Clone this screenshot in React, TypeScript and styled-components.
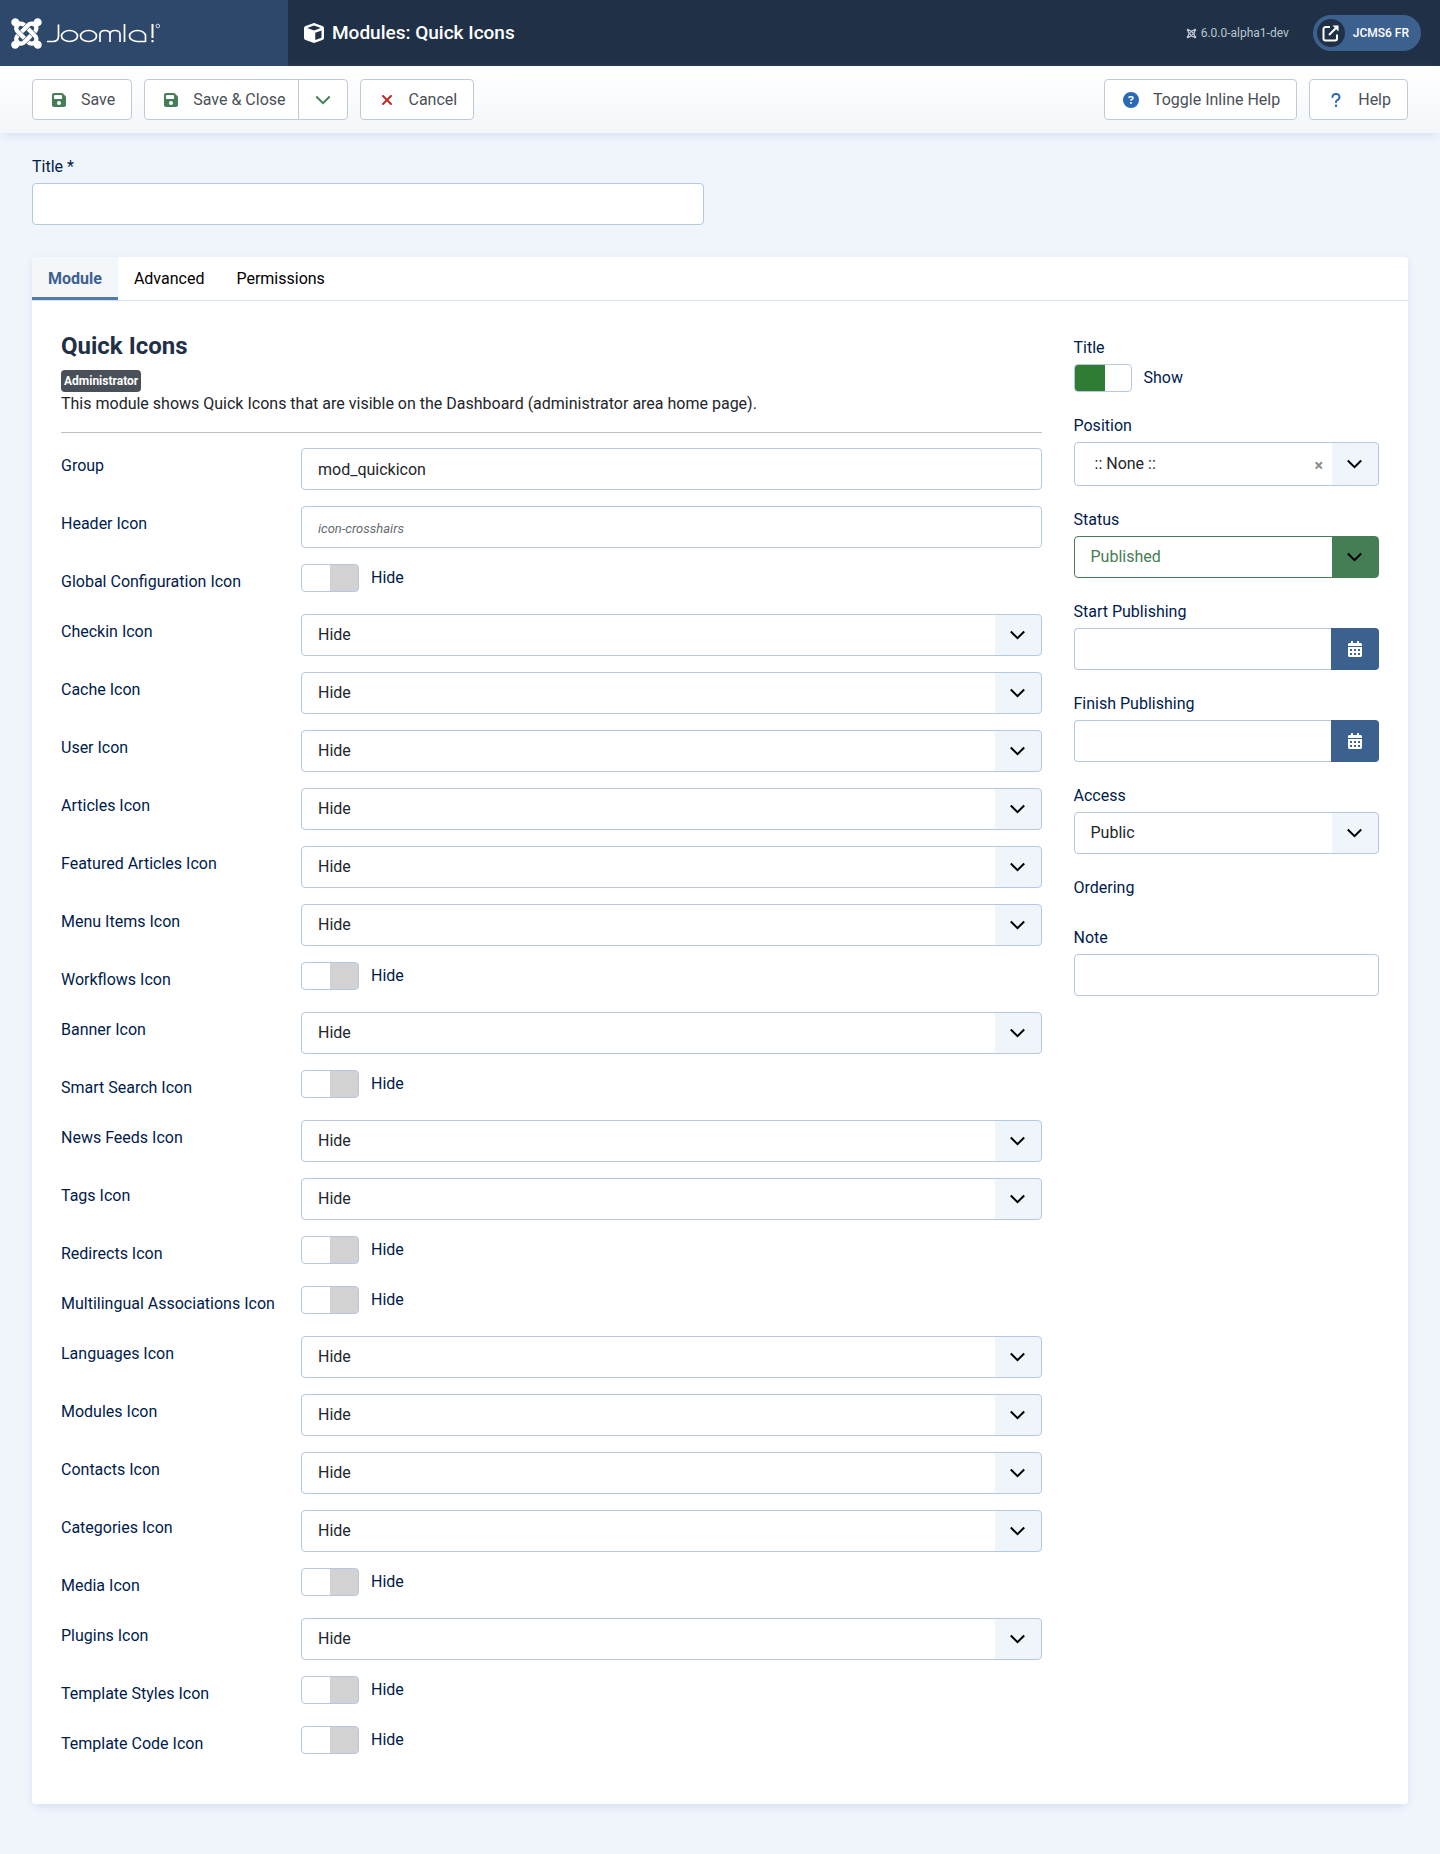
import React from "react";
import styled, { createGlobalStyle, css } from "styled-components";
import { FaCalendarAlt, FaJoomla } from "react-icons/fa";
import {
  FaCube,
  FaFloppyDisk,
  FaCircleQuestion,
  FaQuestion,
  FaXmark,
} from "react-icons/fa6";

const color = {
  page: "#f0f4fb",
  dark: "#1f3047",
  darkSoft: "#2e486b",
  accent: "#3d618f",
  label: "#001b4c",
  text: "#22262a",
  border: "#b5c7e3",
  green: "#457d54",
  red: "#c52827",
  blue: "#2a69b8",
};

const GlobalStyle = createGlobalStyle`
  *, *::before, *::after { box-sizing: border-box; }
  body {
    margin: 0;
    background: ${color.page};
    color: ${color.text};
    font-family: Roboto, "Noto Sans", sans-serif;
    font-size: 16px;
    line-height: 24px;
  }
  button, input, select { font: inherit; color: inherit; }
`;

const Header = styled.header`
  display: flex;
  align-items: center;
  height: 66px;
  background: ${color.dark};
  color: #fff;
`;

const Brand = styled.a`
  display: flex;
  align-items: center;
  flex: 0 0 288px;
  height: 100%;
  padding-left: 9px;
  background: ${color.darkSoft};
`;

const PageTitle = styled.h1`
  display: flex;
  align-items: center;
  gap: 8px;
  flex: 1;
  margin: 0;
  padding-left: 16px;
  font-size: 19px;
  font-weight: 500;
`;

const Version = styled.div`
  display: flex;
  align-items: center;
  gap: 4px;
  margin-right: 24px;
  color: #bcc5d1;
  font-size: 12px;
`;

const SiteLink = styled.a`
  display: flex;
  align-items: center;
  gap: 8px;
  height: 36px;
  margin-right: 19px;
  padding: 0 12px 0 4px;
  border-radius: 18px;
  background: ${color.accent};
  color: #fff;
  font-size: 12px;
  font-weight: 500;
  text-decoration: none;
`;

const SiteLinkIcon = styled.span`
  display: grid;
  place-items: center;
  width: 28px;
  height: 28px;
  border-radius: 50%;
  background: ${color.dark};
`;

const Toolbar = styled.div`
  display: flex;
  gap: 12px;
  padding: 13px 32px;
  background: linear-gradient(#fff, #f3f7fa);
  box-shadow: 0 4px 10px -4px #c9d5ea;
`;

const Spacer = styled.div`
  flex: 1;
`;

const ToolButton = styled.button<{ $tone: string }>`
  display: flex;
  align-items: center;
  height: 41px;
  padding: 0 16px 0 15px;
  border: 1px solid #c0c9d9;
  border-radius: 4px;
  background: #fff;
  color: #495057;

  svg {
    width: 22px;
    margin-right: 11px;
    color: ${(p) => p.$tone};
  }
`;

const SplitButton = styled.div`
  display: flex;

  ${ToolButton}:first-child {
    padding-right: 12px;
    border-radius: 4px 0 0 4px;
  }
  ${ToolButton}:last-child {
    justify-content: center;
    width: 50px;
    margin-left: -1px;
    padding: 0;
    border-radius: 0 4px 4px 0;
  }
  ${ToolButton}:last-child svg {
    margin: 0;
  }
`;

const Main = styled.main`
  padding: 20px 32px 50px;
`;

const Label = styled.label`
  display: block;
  color: ${color.label};
  line-height: 28px;
`;

const Stack = styled.div`
  display: flex;
  flex-direction: column;
  align-items: stretch;
  gap: 2px;
`;

const EmptyStack = styled(Stack)`
  height: 30px;
`;

const TitleField = styled(Stack)`
  width: calc(50% - 16px);
  margin-bottom: 32px;
`;

const TextInput = styled.input`
  display: block;
  width: 100%;
  height: 42px;
  padding: 0 16px;
  border: 1px solid ${color.border};
  border-radius: 4px;
  background: #fff;

  &::placeholder {
    color: #666b70;
    font-size: 13px;
    font-style: italic;
    opacity: 1;
  }
`;

const Card = styled.section`
  border-radius: 4px;
  background: #fff;
  box-shadow: 0 4px 10px -4px #c9d5ea, 0 0 6px #e6edf8;
`;

const Tabs = styled.div`
  display: flex;
  height: 44px;
  border-bottom: 1px solid #d9e2f0;
`;

const Tab = styled.button<{ $active?: boolean }>`
  padding: 0 16px;
  border: 0;
  background: none;
  color: #000;

  ${(p) =>
    p.$active &&
    css`
      padding-top: 3px;
      border-bottom: 3px solid #557aaa;
      border-top-left-radius: 4px;
      background: #f3f7fa;
      color: ${color.accent};
      font-weight: 700;
    `}
`;

const Panel = styled.div`
  display: grid;
  grid-template-columns: 3fr 1fr;
  padding: 33px 13px 44px;
`;

const Column = styled.div`
  min-width: 0;
  padding: 0 16px;
`;

const Heading = styled.h2`
  margin: 0 0 12px;
  color: ${color.dark};
  font-size: 24px;
  line-height: 24px;
`;

const Badge = styled.span`
  display: block;
  width: fit-content;
  padding: 0 3px;
  border-radius: 4px;
  background: #495057;
  color: #fff;
  font-size: 12px;
  font-weight: 700;
  line-height: 22px;
`;

const Description = styled.p`
  margin: 0;
`;

const Rule = styled.hr`
  height: 1px;
  margin: 16px 0 15px;
  border: 0;
  background: #bdbebf;
`;

const Rows = styled.div`
  display: flex;
  flex-direction: column;
  gap: 16px;
`;

const Row = styled.div`
  display: grid;
  grid-template-columns: 240px minmax(0, 1fr);
  align-items: start;

  > ${Label} {
    padding-top: 4px;
  }
`;

const SwitchLabel = styled.label`
  display: flex;
  align-items: center;
  gap: 12px;
  width: fit-content;
  height: 28px;
  color: ${color.label};
`;

const SwitchSlot = styled.div`
  height: 34px;
`;

const SwitchInput = styled.input`
  appearance: none;
  width: 58px;
  height: 28px;
  margin: 0;
  border: 1px solid ${color.border};
  border-radius: 4px;
  background: linear-gradient(90deg, #fff 50%, #d2d2d2 50%);

  &:checked {
    background: linear-gradient(90deg, #2f7d32 30px, #fff 30px);
  }
`;

const SelectFrame = styled.div<{ $success?: boolean; $tall?: boolean }>`
  display: flex;
  align-items: center;
  height: ${(p) => (p.$tall ? 44 : 42)}px;
  border: 1px solid ${(p) => (p.$success ? color.green : color.border)};
  border-radius: 4px;
  background: linear-gradient(
    270deg,
    ${(p) => (p.$success ? color.green : color.page)} 46px,
    #fff 46px
  );
  color: ${(p) => (p.$success ? color.green : color.text)};
  overflow: hidden;

  > svg {
    flex: none;
    margin: 0 16px;
    color: #000;
    pointer-events: none;
  }
`;

const Select = styled.select<{ $inset?: boolean }>`
  appearance: none;
  flex: 1;
  min-width: 0;
  height: 100%;
  padding: 0 ${(p) => (p.$inset ? 20 : 16)}px;
  border: 0;
  background: none;
`;

const ClearButton = styled.button`
  padding: 4px 8px 0;
  border: 0;
  background: none;
  color: #8a8a8a;
  font-size: 16px;
  font-weight: 700;
`;

const DateField = styled.div`
  display: flex;

  ${TextInput} {
    flex: 1;
    border-right: 0;
    border-radius: 4px 0 0 4px;
  }
`;

const DateButton = styled.button`
  display: grid;
  place-items: center;
  flex: 0 0 48px;
  padding: 0;
  border: 0;
  border-radius: 0 4px 4px 0;
  background: ${color.accent};
  color: #fff;
`;

const Sidebar = styled(Column)`
  display: flex;
  flex-direction: column;
  gap: 20px;
`;

const Chevron = () => (
  <svg width="15" height="10" viewBox="0 0 15 10" fill="none" stroke="currentColor" strokeWidth="2" aria-hidden="true">
    <path d="M0.800 1.500 7.500 8.200 14.200 1.500" />
  </svg>
);

const ToolChevron = () => (
  <svg height="10" viewBox="0 0 15 10" fill="none" stroke="currentColor" strokeWidth="2" aria-hidden="true">
    <path d="M0.800 1.500 7.500 8.200 14.200 1.500" />
  </svg>
);

const OutboundIcon = () => (
  <svg width="17" height="17" viewBox="0 0 17 17" fill="none" stroke="#fff" strokeWidth="2" aria-hidden="true">
    <path d="M8 2H3.500A2 2 0 0 0 1.500 4V13.500A2 2 0 0 0 3.500 15.500H13A2 2 0 0 0 15 13.500V9.500" />
    <path d="M7 10 14.500 2.500" />
    <path d="M10.500 0.500H16.500V6.500Z" fill="#fff" stroke="none" />
  </svg>
);

/* Rounded geometric word mark, drawn with strokes. */
const WordMark = () => (
  <svg width="120" height="30" viewBox="0 0 120 30" fill="none" stroke="#fff" strokeWidth="1.7" aria-label="Joomla!" role="img">
    <path d="M3 23.500H9Q14.500 23.500 14.500 18V6.500" />
    <ellipse cx="25.500" cy="18" rx="8" ry="5.500" />
    <ellipse cx="44.500" cy="18" rx="8" ry="5.500" />
    <path d="M56 24V16.500Q56 12.500 61 12.500Q66 12.500 66 16.500V24M66 16.500Q66 12.500 71 12.500Q76 12.500 76 16.500V24" />
    <path d="M80.500 6V24" />
    <path d="M101.500 24V18A8 5.500 0 1 0 93.500 23.500H101.500" />
    <path d="M108.500 6V20M108.500 22V24.200" strokeWidth="2" />
    <circle cx="113.800" cy="8" r="1.800" strokeWidth="0.800" />
  </svg>
);

const HideSelect = ({ id }: { id: string }) => (
  <SelectFrame>
    <Select id={id} defaultValue="0">
      <option value="0">Hide</option>
      <option value="1">Show</option>
    </Select>
    <Chevron />
  </SelectFrame>
);

const HideSwitch = ({ id }: { id: string }) => (
  <SwitchSlot>
    <SwitchLabel>
      <SwitchInput id={id} type="checkbox" role="switch" />
      Hide
    </SwitchLabel>
  </SwitchSlot>
);

const iconRows: { name: string; kind: "select" | "switch" }[] = [
  { name: "Global Configuration Icon", kind: "switch" },
  { name: "Checkin Icon", kind: "select" },
  { name: "Cache Icon", kind: "select" },
  { name: "User Icon", kind: "select" },
  { name: "Articles Icon", kind: "select" },
  { name: "Featured Articles Icon", kind: "select" },
  { name: "Menu Items Icon", kind: "select" },
  { name: "Workflows Icon", kind: "switch" },
  { name: "Banner Icon", kind: "select" },
  { name: "Smart Search Icon", kind: "switch" },
  { name: "News Feeds Icon", kind: "select" },
  { name: "Tags Icon", kind: "select" },
  { name: "Redirects Icon", kind: "switch" },
  { name: "Multilingual Associations Icon", kind: "switch" },
  { name: "Languages Icon", kind: "select" },
  { name: "Modules Icon", kind: "select" },
  { name: "Contacts Icon", kind: "select" },
  { name: "Categories Icon", kind: "select" },
  { name: "Media Icon", kind: "switch" },
  { name: "Plugins Icon", kind: "select" },
  { name: "Template Styles Icon", kind: "switch" },
  { name: "Template Code Icon", kind: "switch" },
];

const DateInput = ({ id }: { id: string }) => (
  <DateField>
    <TextInput id={id} type="text" />
    <DateButton type="button" aria-label="Open the calendar">
      <FaCalendarAlt size={16} />
    </DateButton>
  </DateField>
);

export default function App() {
  return (
    <>
      <GlobalStyle />
      <Header>
        <Brand href="#">
          <FaJoomla size={35} color="#fff" />
          <WordMark />
        </Brand>
        <PageTitle>
          <FaCube size={20} />
          Modules: Quick Icons
        </PageTitle>
        <Version>
          <FaJoomla size={11} />
          6.0.0-alpha1-dev
        </Version>
        <SiteLink href="#">
          <SiteLinkIcon>
            <OutboundIcon />
          </SiteLinkIcon>
          JCMS6 FR
        </SiteLink>
      </Header>

      <Toolbar>
        <ToolButton type="button" $tone={color.green}>
          <FaFloppyDisk size={16} />
          Save
        </ToolButton>
        <SplitButton>
          <ToolButton type="button" $tone={color.green}>
            <FaFloppyDisk size={16} />
            Save &amp; Close
          </ToolButton>
          <ToolButton type="button" $tone={color.green} aria-label="More save options">
            <ToolChevron />
          </ToolButton>
        </SplitButton>
        <ToolButton type="button" $tone={color.red}>
          <FaXmark size={16} />
          Cancel
        </ToolButton>
        <Spacer />
        <ToolButton type="button" $tone={color.blue}>
          <FaCircleQuestion size={16} />
          Toggle Inline Help
        </ToolButton>
        <ToolButton type="button" $tone={color.blue}>
          <FaQuestion size={16} />
          Help
        </ToolButton>
      </Toolbar>

      <Main>
        <TitleField>
          <Label htmlFor="title">Title *</Label>
          <TextInput id="title" type="text" required />
        </TitleField>

        <Card>
          <Tabs role="tablist">
            <Tab type="button" role="tab" aria-selected="true" $active>
              Module
            </Tab>
            <Tab type="button" role="tab" aria-selected="false">
              Advanced
            </Tab>
            <Tab type="button" role="tab" aria-selected="false">
              Permissions
            </Tab>
          </Tabs>
          <Panel role="tabpanel">
            <Column>
              <Heading>Quick Icons</Heading>
              <Badge>Administrator</Badge>
              <Description>
                This module shows Quick Icons that are visible on the Dashboard (administrator area home page).
              </Description>
              <Rule />
              <Rows>
                <Row>
                  <Label htmlFor="group">Group</Label>
                  <TextInput id="group" type="text" defaultValue="mod_quickicon" />
                </Row>
                <Row>
                  <Label htmlFor="header-icon">Header Icon</Label>
                  <TextInput id="header-icon" type="text" placeholder="icon-crosshairs" />
                </Row>
                {iconRows.map(({ name, kind }) => {
                  const id = name.toLowerCase().replace(/ /g, "-");
                  return (
                    <Row key={id}>
                      <Label htmlFor={id}>{name}</Label>
                      {kind === "select" ? <HideSelect id={id} /> : <HideSwitch id={id} />}
                    </Row>
                  );
                })}
              </Rows>
            </Column>

            <Sidebar>
              <Stack>
                <Label htmlFor="show-title">Title</Label>
                <SwitchLabel>
                  <SwitchInput id="show-title" type="checkbox" role="switch" defaultChecked />
                  Show
                </SwitchLabel>
              </Stack>
              <Stack>
                <Label htmlFor="position">Position</Label>
                <SelectFrame $tall>
                  <Select id="position" $inset>
                    <option>:: None ::</option>
                  </Select>
                  <ClearButton type="button" aria-label="Clear position">
                    ×
                  </ClearButton>
                  <Chevron />
                </SelectFrame>
              </Stack>
              <Stack>
                <Label htmlFor="status">Status</Label>
                <SelectFrame $success>
                  <Select id="status">
                    <option>Published</option>
                  </Select>
                  <Chevron />
                </SelectFrame>
              </Stack>
              <Stack>
                <Label htmlFor="publish-up">Start Publishing</Label>
                <DateInput id="publish-up" />
              </Stack>
              <Stack>
                <Label htmlFor="publish-down">Finish Publishing</Label>
                <DateInput id="publish-down" />
              </Stack>
              <Stack>
                <Label htmlFor="access">Access</Label>
                <SelectFrame>
                  <Select id="access">
                    <option>Public</option>
                  </Select>
                  <Chevron />
                </SelectFrame>
              </Stack>
              <EmptyStack>
                <Label as="div">Ordering</Label>
              </EmptyStack>
              <Stack>
                <Label htmlFor="note">Note</Label>
                <TextInput id="note" type="text" />
              </Stack>
            </Sidebar>
          </Panel>
        </Card>
      </Main>
    </>
  );
}
